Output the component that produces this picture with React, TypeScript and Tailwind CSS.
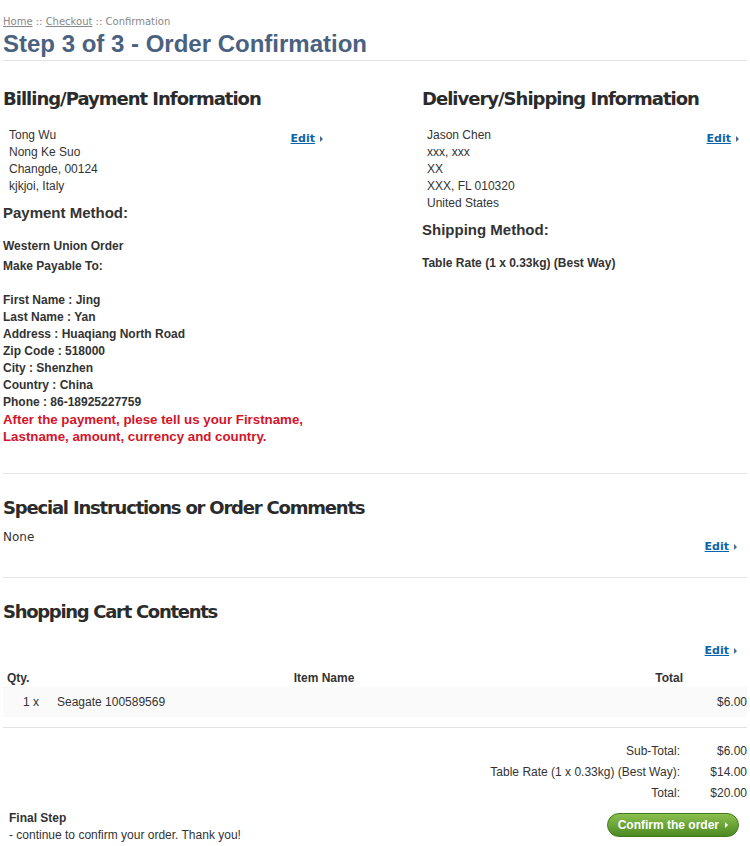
import React from "react";

const EditLink = () => (
    <a href="#" className="inline-flex items-center gap-[5px] text-[11px] font-bold text-[#0b64a8] underline leading-[17px]" style={{ fontFamily: "'DejaVu Sans', sans-serif" }}>
        Edit
        <span className="inline-block w-0 h-0 border-y-[3px] border-y-transparent border-l-[3px] border-l-[#4a6a8a]" />
    </a>
);

const headingFont = { fontFamily: "'DejaVu Sans', sans-serif" };

const App = () => {
    const payee = [
        "First Name : Jing",
        "Last Name : Yan",
        "Address : Huaqiang North Road",
        "Zip Code : 518000",
        "City : Shenzhen",
        "Country : China",
        "Phone : 86-18925227759",
    ];

    const totals = [
        { label: "Sub-Total:", value: "$6.00" },
        { label: "Table Rate (1 x 0.33kg) (Best Way):", value: "$14.00" },
        { label: "Total:", value: "$20.00" },
    ];

    return (
        <div className="w-[750px] min-h-[846px] bg-white text-[#333] px-[3px]" style={{ fontFamily: "'Liberation Sans', Arial, sans-serif" }}>
            {/* breadcrumb + title */}
            <div className="pt-[15px] text-[10px] text-[#888] leading-[14px]" style={headingFont}>
                <a href="#" className="underline">Home</a> ::{" "}
                <a href="#" className="underline">Checkout</a> :: Confirmation
            </div>
            <h1 className="mt-[1px] text-[24px] font-bold text-[#4a617f] leading-[28px] pb-[2px] border-b border-[#e3e3e3]">
                Step 3 of 3 - Order Confirmation
            </h1>

            {/* billing / delivery */}
            <div className="flex pt-[26px]">
                <div className="w-[419px]">
                    <h2 className="text-[18px] font-bold text-[#2b2b2b] leading-[24px] tracking-[-1px]" style={headingFont}>
                        Billing/Payment Information
                    </h2>
                    <div className="flex justify-between w-[320px] mt-[16px] pl-[6px]">
                        <div className="text-[12px] leading-[17px]">
                            <div>Tong Wu</div>
                            <div>Nong Ke Suo</div>
                            <div>Changde, 00124</div>
                            <div>kjkjoi, Italy</div>
                        </div>
                        <div className="pt-[1px] leading-[17px]"><EditLink /></div>
                    </div>
                    <h3 className="mt-[9px] text-[15px] font-bold text-[#333] leading-[18px]">Payment Method:</h3>
                    <div className="mt-[14px] text-[12px] font-bold leading-[20px]">
                        <div>Western Union Order</div>
                        <div>Make Payable To:</div>
                    </div>
                    <div className="mt-[16px] text-[12px] font-bold leading-[17px]">
                        {payee.map((line) => (
                            <div key={line}>{line}</div>
                        ))}
                    </div>
                    <p className="text-[13.3px] font-bold text-[#d3142a] leading-[17px]">
                        After the payment, plese tell us your Firstname,
                        <br />
                        Lastname, amount, currency and country.
                    </p>
                </div>
                <div className="flex-1">
                    <h2 className="text-[18px] font-bold text-[#2b2b2b] leading-[24px] tracking-[-1px]" style={headingFont}>
                        Delivery/Shipping Information
                    </h2>
                    <div className="flex justify-between w-[317px] mt-[16px] pl-[5px]">
                        <div className="text-[12px] leading-[17px]">
                            <div>Jason Chen</div>
                            <div>xxx, xxx</div>
                            <div>XX</div>
                            <div>XXX, FL 010320</div>
                            <div>United States</div>
                        </div>
                        <div className="pt-[1px] leading-[17px]"><EditLink /></div>
                    </div>
                    <h3 className="mt-[9px] text-[15px] font-bold text-[#333] leading-[18px]">Shipping Method:</h3>
                    <div className="mt-[16px] text-[12px] font-bold leading-[17px]">Table Rate (1 x 0.33kg) (Best Way)</div>
                </div>
            </div>

            {/* comments */}
            <div className="mt-[28px] border-t border-[#e3e3e3] pt-[22px] pb-[22px]">
                <h2 className="text-[18px] font-bold text-[#2b2b2b] leading-[24px] tracking-[-1.2px]" style={headingFont}>
                    Special Instructions or Order Comments
                </h2>
                <div className="flex justify-between items-start mt-[9px] pr-[10px]">
                    <div className="text-[12px] leading-[17px]" style={headingFont}>None</div>
                    <div className="pt-[7px] leading-[17px]"><EditLink /></div>
                </div>
            </div>

            {/* cart */}
            <div className="border-t border-[#e3e3e3] pt-[22px]">
                <h2 className="text-[18px] font-bold text-[#2b2b2b] leading-[24px] tracking-[-1.3px]" style={headingFont}>
                    Shopping Cart Contents
                </h2>
                <div className="flex justify-end pr-[10px] mt-[18px] leading-[17px]"><EditLink /></div>
                <div className="flex text-[12px] font-bold leading-[17px] mt-[11px] px-[4px]">
                    <div className="w-[50px]">Qty.</div>
                    <div className="flex-1 text-center pr-[42px]">Item Name</div>
                    <div className="w-[110px] pr-[60px] text-right">Total</div>
                </div>
                <div className="flex items-center h-[30px] bg-[#fafafa] text-[12px] leading-[17px] mb-[10px]">
                    <div className="w-[54px] pl-[20px]">1 x</div>
                    <div className="flex-1">Seagate 100589569</div>
                    <div className="text-right">$6.00</div>
                </div>
                <div className="border-t border-[#e3e3e3] pt-[13px]">
                    {totals.map((t) => (
                        <div key={t.label} className="flex justify-end text-[12px] leading-[21px]">
                            <div className="text-right">{t.label}</div>
                            <div className="w-[67px] text-right">{t.value}</div>
                        </div>
                    ))}
                </div>
                <div className="flex justify-between items-start mt-[6px]">
                    <div className="pl-[6px] text-[12px] leading-[17px]">
                        <div className="font-bold">Final Step</div>
                        <div>- continue to confirm your order. Thank you!</div>
                    </div>
                    <button className="mt-[3px] mr-[8px] h-[24px] px-[10px] rounded-full border border-[#3f7a1e] bg-gradient-to-b from-[#8cc04e] to-[#4b8a22] text-white text-[12px] font-bold flex items-center gap-[6px]">
                        Confirm the order
                        <span className="inline-block w-0 h-0 border-y-[3px] border-y-transparent border-l-[3px] border-l-white" />
                    </button>
                </div>
            </div>
        </div>
    );
};

export default App;
